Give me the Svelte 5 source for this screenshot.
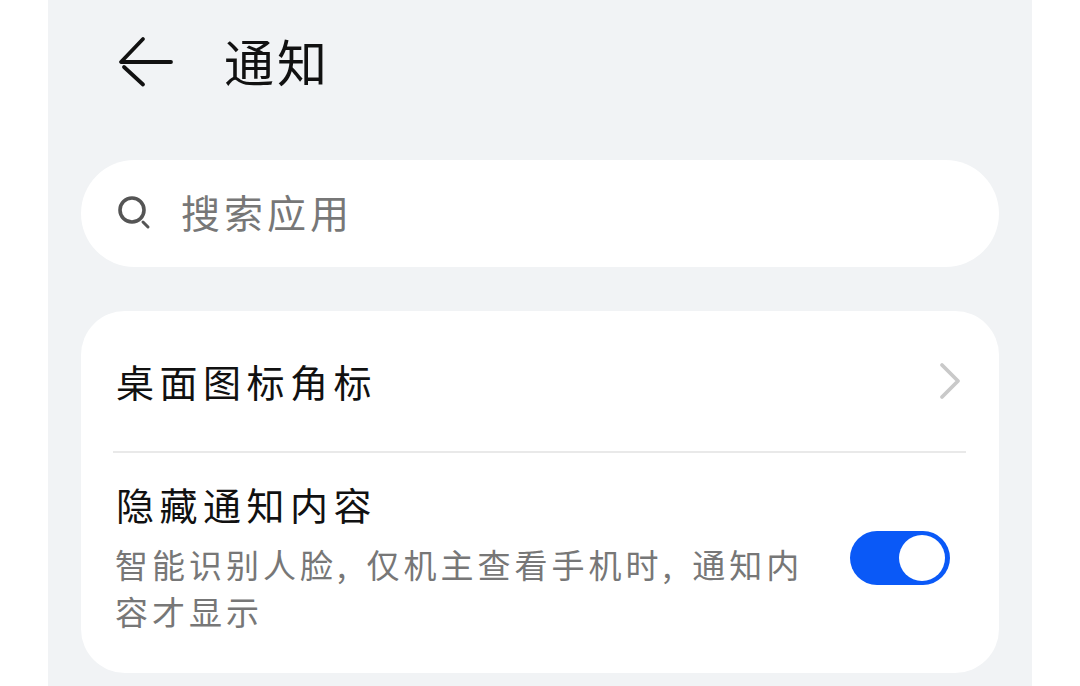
<script>
	let hideContent = $state(true);
</script>

<div class="page">
	<header class="topbar">
		<button class="back" aria-label="返回">
			<svg width="56" height="52" viewBox="0 0 56 52" fill="none" stroke="#111" stroke-width="3.8" stroke-linecap="round" stroke-linejoin="round">
				<path d="M25 3 L3 26 H53" />
				<path d="M6 31 L25 48.5" />
			</svg>
		</button>
		<h1>通知</h1>
	</header>

	<div class="search">
		<svg width="38" height="38" viewBox="0 0 38 38" fill="none" stroke="#555" stroke-linecap="round">
			<circle cx="16" cy="17" r="12" stroke-width="3.6" />
			<path d="M27 29 L32 34" stroke-width="3" />
		</svg>
		<span>搜索应用</span>
	</div>

	<section class="card">
		<div class="row first">
			<span class="title">桌面图标角标</span>
			<svg width="24" height="40" viewBox="0 0 24 40" fill="none" stroke="#c9c9c9" stroke-width="3.8" stroke-linecap="round" stroke-linejoin="round">
				<path d="M5 4 L21 20 L5 36" />
			</svg>
		</div>
		<div class="divider"></div>
		<div class="row second">
			<div class="text">
				<span class="title">隐藏通知内容</span>
				<p class="sub">智能识别人脸, 仅机主查看手机时, 通知内容才显示</p>
			</div>
			<button
				class="toggle"
				class:on={hideContent}
				aria-label="隐藏通知内容"
				onclick={() => (hideContent = !hideContent)}
			>
				<span class="knob"></span>
			</button>
		</div>
	</section>
</div>

<style>
	:global(body) {
		background: #fff;
	}

	.page {
		width: 984px;
		height: 686px;
		margin: 0 auto;
		padding: 0 33px;
		box-sizing: border-box;
		background: #f1f3f5;
		overflow: hidden;
		font-family: "Noto Sans CJK SC", "Liberation Sans", sans-serif;
	}

	.topbar {
		display: flex;
		align-items: center;
		height: 124px;
		padding-left: 37px;
	}

	.back {
		display: flex;
		padding: 0;
		border: none;
		background: none;
	}

	h1 {
		margin: 0 0 4px 50px;
		font-size: 50px;
		font-weight: 400;
		letter-spacing: 3px;
		color: #111;
	}

	.search {
		display: flex;
		align-items: center;
		gap: 27px;
		height: 107px;
		margin-top: 36px;
		padding: 0 0 3px 35px;
		box-sizing: border-box;
		border-radius: 54px;
		background: #fff;
	}

	.search span {
		margin-bottom: 2px;
		font-size: 39px;
		letter-spacing: 4px;
		color: #777;
	}

	.card {
		margin-top: 44px;
		padding: 0 33px 0 32px;
		height: 362px;
		border-radius: 44px;
		background: #fff;
	}

	.row {
		display: flex;
		justify-content: space-between;
	}

	.first {
		align-items: center;
		height: 140px;
		padding: 0 5px 0 3px;
		box-sizing: border-box;
	}

	.divider {
		height: 2px;
		background: #e9e9e9;
	}

	.second {
		align-items: center;
		padding: 26px 16px 0 3px;
	}

	.title {
		font-size: 38px;
		line-height: 50px;
		letter-spacing: 5.5px;
		color: #111;
	}

	.text {
		width: 700px;
	}

	.sub {
		margin: 12px 0 0 -1px;
		font-size: 33px;
		line-height: 47px;
		letter-spacing: 4px;
		word-spacing: 5px;
		color: #777;
	}

	.toggle {
		position: relative;
		flex: none;
		width: 100px;
		height: 54px;
		margin-top: 1px;
		padding: 0;
		border: none;
		border-radius: 27px;
		background: #ccc;
	}

	.toggle.on {
		background: #0a59f7;
	}

	.knob {
		position: absolute;
		top: 4px;
		left: 4px;
		width: 46px;
		height: 46px;
		border-radius: 50%;
		background: #fff;
	}

	.toggle.on .knob {
		left: 49px;
	}
</style>
